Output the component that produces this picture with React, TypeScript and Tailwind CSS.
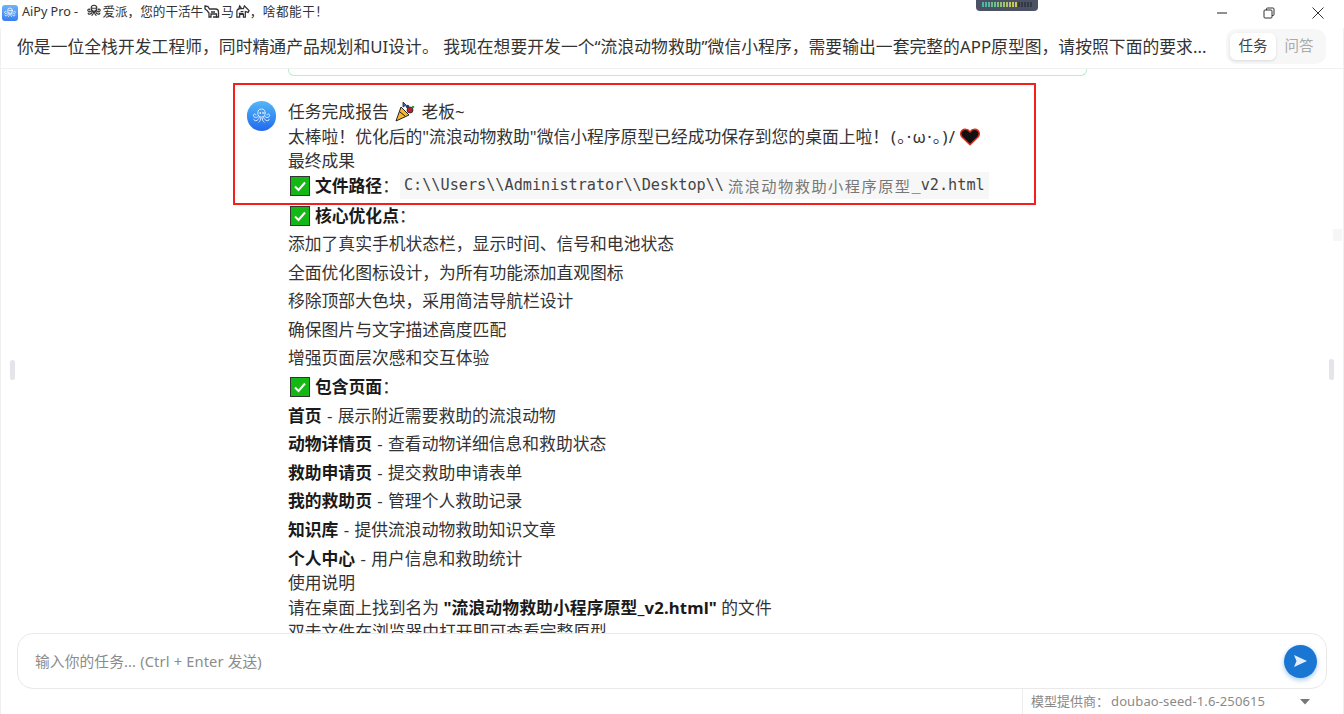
const Octopus = ({ className, weight = 1.3 }: { className: string; weight?: number }) => (
  <svg className={className} viewBox="0 0 24 24" fill="none" stroke="currentColor" strokeWidth={weight} strokeLinecap="round">
    <ellipse cx="12" cy="8" rx="4.200" ry="4.600" />
    <circle cx="10.400" cy="8" r="0.500" />
    <circle cx="13.600" cy="8" r="0.500" />
    <path d="M8.500 11.500c-1 1.500-2.500 2-4 1.500-1.800-.6-2.400-2.400-1.200-3.500 1-.9 2.500-.3 2.400.9" />
    <path d="M15.500 11.500c1 1.500 2.500 2 4 1.500 1.800-.6 2.400-2.400 1.200-3.500-1-.9-2.500-.3-2.400.9" />
    <path d="M9.500 13c-.5 2-2 3.500-4 3.800-1.300.2-2.300-.6-2.200-1.600" />
    <path d="M14.500 13c.5 2 2 3.500 4 3.800 1.300.2 2.300-.6 2.200-1.600" />
    <path d="M11.200 13.500c0 2.200-.7 3.800-2.200 5" />
    <path d="M12.800 13.500c0 2.200.7 3.800 2.200 5" />
  </svg>
);

const CheckMark = () => (
  <svg className="w-[20px] h-[20px] shrink-0" viewBox="0 0 20 20">
    <rect x="0.500" y="0.500" width="19" height="19" fill="#14b814" stroke="#333" strokeWidth="1" />
    <path d="M5 10.500l3.500 3.500 6.500-7.500" fill="none" stroke="#fff" strokeWidth="2" />
  </svg>
);

const Popper = () => (
  <svg className="w-[20px] h-[21px] inline-block align-[-4px] mx-[2px]" viewBox="0 0 20 21">
    <path d="M6 6L14 14L1 20Z" fill="#f5b82e" stroke="#222" strokeWidth="1" strokeLinejoin="round" />
    <path d="M5 11l5 4" stroke="#222" strokeWidth="1" />
    <path d="M8 1l3 3-3 2z" fill="#2a6fc9" stroke="#222" strokeWidth="0.800" />
    <circle cx="15" cy="9" r="3" fill="#b3262e" stroke="#222" strokeWidth="0.800" />
    <circle cx="12.500" cy="5.500" r="1.800" fill="#2a3a66" />
    <circle cx="18" cy="6" r="1.300" fill="#2f9e44" />
  </svg>
);

const Heart = () => (
  <svg className="w-[20px] h-[18px] inline-block align-[-3px] ml-[4px]" viewBox="0 0 20 18">
    <path d="M10 16.800L2 9C-.5 6 1 1.500 5 1.300 7.500 1.200 9 2.500 10 4 11 2.500 12.500 1.200 15 1.300 19 1.500 20.500 6 18 9Z" fill="#111" stroke="#e32a17" strokeWidth="1.500" strokeLinejoin="round" />
  </svg>
);

const Ox = () => (
  <svg className="w-[16px] h-[15px] inline-block align-[-3px] mx-[1px]" viewBox="0 0 16 15" fill="none" stroke="#333" strokeWidth="1.300">
    <path d="M1 2l3 .5 1.500 2.500h6c2 0 3 1 3 3v5h-2v-3H7v3H5V9L3 6.500 1 5z" />
    <path d="M9 13h4M7 8h4" />
  </svg>
);

const Horse = () => (
  <svg className="w-[15px] h-[15px] inline-block align-[-3px] ml-[1px]" viewBox="0 0 16 16" fill="none" stroke="#333" strokeWidth="1.300">
    <path d="M2 14V8c0-2 2-3 4-3h3l1-3 2 2 3 3-1 2-3-1v6h-2v-3H5v3z" />
    <path d="M4 5l1-3 2 3M6 8h3M4 10h5" />
  </svg>
);

const Row = ({ children }: { children: React.ReactNode }) => (
  <div className="leading-[24.5px] mb-[4.1px] [word-spacing:1px]">{children}</div>
);

const Plain = ({ children }: { children: React.ReactNode }) => (
  <div className="leading-[24.5px]">{children}</div>
);

const CheckTitle = ({ title, code }: { title: string; code?: boolean }) => (
  <div className="flex items-center h-[24.500px] gap-[5px] pl-[2px]">
    <CheckMark />
    <span className="-mt-[1px] ml-[2px] -translate-x-[2px] font-bold text-[#1a1a1a]">{title}</span>
    <span className="-mt-[1px] -ml-[7px]">：</span>
    {code && (
      <code className="-ml-[4px] h-[27px] flex items-center pl-[4px] pr-[4px] bg-[#f7f7f7] text-[#444] text-[15.2px] [font-family:'DejaVu_Sans_Mono',monospace] whitespace-nowrap">
        C:\\Users\\Administrator\\Desktop\\
        <span className="ml-[4px] text-[#777] tracking-[1.5px] [font-family:'Noto_Sans_CJK_SC',sans-serif]">流浪动物救助小程序原型</span>
        _v2.html
      </code>
    )}
  </div>
);

const features = [
  '添加了真实手机状态栏，显示时间、信号和电池状态',
  '全面优化图标设计，为所有功能添加直观图标',
  '移除顶部大色块，采用简洁导航栏设计',
  '确保图片与文字描述高度匹配',
  '增强页面层次感和交互体验',
];

const pages = [
  ['首页', '展示附近需要救助的流浪动物'],
  ['动物详情页', '查看动物详细信息和救助状态'],
  ['救助申请页', '提交救助申请表单'],
  ['我的救助页', '管理个人救助记录'],
  ['知识库', '提供流浪动物救助知识文章'],
  ['个人中心', '用户信息和救助统计'],
];

const ticks = ['#49b6a6', '#4cb8a0', '#55bb98', '#62bd90', '#70bf88', '#80c180', '#90c278', '#a0c370', '#aec468', '#bcc460', '#c6c45a', '#cfc254'];

export default function App() {
  return (
    <div className="relative h-[714px] w-[1344px] overflow-hidden bg-white flex flex-col text-[#333] [font-family:'Noto_Sans','Noto_Sans_CJK_SC',sans-serif]">
      {/* title bar */}
      <div className="h-[28px] shrink-0 flex items-center pl-[2px] pb-[3px] text-[12.6px] text-[#333]">
        <div className="w-[16px] h-[16px] rounded-[3px] bg-gradient-to-b from-[#6db4f7] to-[#3b7ff0] text-white flex items-center justify-center mr-[4px]">
          <Octopus className="w-[14px] h-[14px]" />
        </div>
        <span className="whitespace-nowrap">
          AiPy Pro - <Octopus weight={1.800} className="w-[16px] h-[16px] inline-block align-[-3px] ml-[5px] text-[#333]" />爱派，您的干活牛<Ox />马<Horse /><span className="tracking-[0.5px]">，啥都能干！</span>
        </span>
        <div className="ml-auto flex items-center">
          <div className="w-[46px] flex justify-center">
            <svg width="12" height="12" viewBox="0 0 12 12"><path d="M1 6h10" stroke="#222" strokeWidth="1" /></svg>
          </div>
          <div className="w-[48px] flex justify-center mr-[2px]">
            <svg width="12" height="12" viewBox="0 0 12 12" fill="none" stroke="#333" strokeWidth="1"><rect x="1" y="3" width="8" height="8" rx="1" /><path d="M3.500 3V2a1 1 0 0 1 1-1H10a1 1 0 0 1 1 1v5.500a1 1 0 0 1-1 1H9" /></svg>
          </div>
          <div className="w-[46px] flex justify-center mr-[3px]">
            <svg width="12" height="12" viewBox="0 0 12 12" stroke="#333" strokeWidth="1"><path d="M.5.5l11 11M11.500.5l-11 11" /></svg>
          </div>
        </div>
      </div>

      {/* task header */}
      <div className="h-[41px] shrink-0 flex items-center pl-[17px] pr-[18px] border-b border-[#f0f0f0] text-[16.8px] whitespace-nowrap">
        <div className="flex-1 min-w-0 -mt-[2px] overflow-hidden tracking-[0.04px]">你是一位全栈开发工程师，同时精通产品规划和UI设计。 我现在想要开发一个“流浪动物救助”微信小程序，需要输出一套完整的APP原型图，请按照下面的要求...</div>
        <div className="w-[100px] h-[35px] -mt-[4px] p-[4px] rounded-[10px] bg-[#f7f7f7] flex items-center text-[14.500px]">
          <div className="w-[46px] h-[27px] rounded-[6px] bg-white shadow-[0_1px_3px_rgba(0,0,0,0.12)] flex items-center justify-center text-[#444]">任务</div>
          <div className="flex-1 text-center text-[#aaa]">问答</div>
        </div>
      </div>

      {/* message list */}
      <div className="flex-1 min-h-0 overflow-hidden text-[16.8px]">
        <div className="ml-[288px] w-[799px] h-[7px] border border-t-0 border-[#b9efc9] rounded-b-[6px]" />
        <div className="flex mt-[24px] ml-[247px] gap-[12px]">
          <div className="w-[29px] h-[30px] mt-[1px] shrink-0 rounded-full bg-gradient-to-b from-[#55b6f6] to-[#2368f0] text-[#e8f2ff] flex items-center justify-center">
            <Octopus className="w-[21px] h-[21px]" weight={1} />
          </div>
          <div className="min-w-0 whitespace-nowrap">
            <Plain>任务完成报告 <Popper /> 老板~</Plain>
            <Plain>太棒啦！优化后的"流浪动物救助"微信小程序原型已经成功保存到您的桌面上啦！<span className="ml-[2px] tracking-[1.2px]">(。·ω·。)/</span><Heart /></Plain>
            <Plain>最终成果</Plain>
            <div className="mb-[5.500px]"><CheckTitle title="文件路径" code /></div>
            <div className="mb-[4.100px]"><CheckTitle title="核心优化点" /></div>
            {features.map((f) => <Row key={f}>{f}</Row>)}
            <div className="mb-[4.100px]"><CheckTitle title="包含页面" /></div>
            {pages.map(([name, desc]) => (
              <Row key={name}><b className="font-bold text-[#1a1a1a]">{name}</b> - {desc}</Row>
            ))}
            <div className="-mt-[4.100px]">
              <Plain>使用说明</Plain>
              <Plain>请在桌面上找到名为 <b className="font-bold text-[#1a1a1a] tracking-[0.12px]">"流浪动物救助小程序原型_v2.html"</b> 的文件</Plain>
              <Plain>双击文件在浏览器中打开即可查看完整原型</Plain>
            </div>
          </div>
        </div>
      </div>

      {/* input */}
      <div className="h-[56px] shrink-0 mx-[17px] rounded-[16px] border border-[#e9e9e9] flex items-center pl-[17px] pr-[9px] bg-white text-[14.700px] text-[#8c8c8c]">
        <span className="flex-1 tracking-[0.14px]">输入你的任务... (Ctrl + Enter 发送)</span>
        <div className="w-[33px] h-[33px] rounded-full bg-[#1976d2] shadow-[0_2px_5px_rgba(25,118,210,0.4)] flex items-center justify-center">
          <svg width="15" height="14" viewBox="0 0 15 14"><path d="M1 1l13 6-13 6 2.500-6z" fill="#e3eefb" /></svg>
        </div>
      </div>

      {/* model picker */}
      <div className="h-[25px] shrink-0 ml-[1022px] pl-[8px] pr-[36px] border-l border-[#ededed] flex items-center text-[13px] text-[#8a8a8a] whitespace-nowrap">
        <span>模型提供商：</span>
        <span className="ml-[2px] flex-1 tracking-[0.12px]">doubao-seed-1.6-250615</span>
        <svg className="-mr-[2px]" width="10" height="6" viewBox="0 0 10 6"><path d="M0 0h10L5 5.500z" fill="#777" /></svg>
      </div>

      {/* overlays: annotation, window notch, resize handles */}
      <div className="absolute left-[233px] top-[83px] w-[803px] h-[122px] border-[2px] border-[#f5201c]" />
      <div className="absolute left-[976px] top-0 w-[62px] h-[11px] rounded-b-[4px] bg-[#4b5263] flex items-start justify-center pt-[2px] gap-[1px]">
        {ticks.map((c, i) => <div key={i} className="w-[2px] h-[5px]" style={{ backgroundColor: c }} />)}
        {[0, 1, 2, 3, 4].map((i) => <div key={i} className="w-[2px] h-[5px] bg-[#343945]" />)}
      </div>
      <div className="absolute left-[10px] top-[360px] w-[5px] h-[20px] rounded-full bg-[#e4e4ea]" />
      <div className="absolute left-[1329px] top-[359px] w-[5px] h-[21px] rounded-full bg-[#e4e4ea]" />
      <div className="absolute left-[1333px] top-[229px] w-[9px] h-[12px] bg-[#f6f6f6]" />
      <div className="absolute left-0 top-[28px] bottom-0 w-[1px] bg-[#f0f0f0]" />
      <div className="absolute right-0 top-[28px] bottom-0 w-[1px] bg-[#f0f0f0]" />
    </div>
  );
}
